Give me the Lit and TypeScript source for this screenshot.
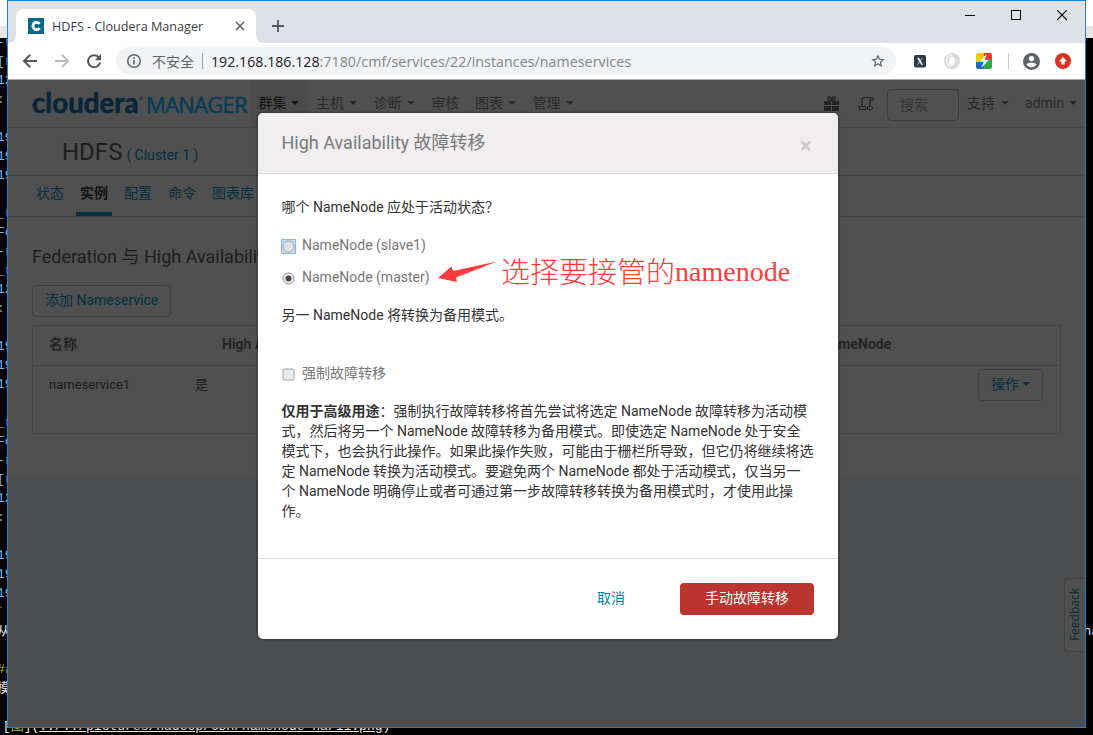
import { LitElement, html, css, nothing } from "lit";
import { customElement } from "lit/decorators.js";

const EDITOR_LINES: [string, string, string?][] = [
  ["-r", "b"], ["[r", "b"], ["12", "b"], ["::", "g"], ["", ""],
  ["19", "b"], ["19", "b"], ["19", "b"], ["", ""],
  ["_r", "b"], ["Fo", "b"], ["-r", "b"], ["_r", "b"], ["12", "b"], ["::", "g"], ["", ""],
  ["19", "b"], ["19", "b"], ["19", "b"], ["", ""],
  ["_r", "b"], ["Fo", "b"], ["-r", "b"], ["[r", "b"], ["12", "b"], ["::", "g"], ["", ""],
  ["19", "b"], ["19", "b"], ["19", "b"], ["``", "g"], ["从", "w", "na"], ["", ""],
  ["##", "h"], ["模", "w"], ["", ""],
];

@customElement("editor-backdrop")
class EditorBackdrop extends LitElement {
  static styles = css`
    :host { display: block; height: 735px; background: #000; overflow: hidden; }
    .bar { height: 26px; background: #fff; }
    .ruler { height: 12px; background: #e6e6e6; }
    .lines { margin-top: -5px; font: 13px/19px "Liberation Mono", "Noto Sans CJK SC", monospace; }
    .line { display: flex; justify-content: space-between; height: 19px; white-space: pre; }
    .line > :first-child { margin-left: -3px; }
    .line > .last { margin-left: -5px; }
    .b { color: #7fb2e8; } .g { color: #8a9a90; } .w { color: #e8e8e8; } .h { color: #a5c63b; }
    .o { color: #e0a040; }
    .tail { margin-right: -6px; color: #e8e8e8; }
  `;
  render() {
    return html`
      <div class="bar"></div><div class="ruler"></div>
      <div class="lines">
        ${EDITOR_LINES.map(([t, c, tail]) => html`<div class="line"><span class=${c}>${t}</span>${tail ? html`<span class="tail">${tail}</span>` : nothing}</div>`)}
        <div class="line"><div class="w last"><span class="o">!</span>[<span class="h">图</span>](<u>../../pictures/hadoop/CDH/namenode_ha/11.png</u>)</div></div>
      </div>`;
  }
}

@customElement("browser-chrome")
class BrowserChrome extends LitElement {
  static styles = css`
    :host { display: block; font-family: "Open Sans", "Noto Sans CJK SC", sans-serif; }
    svg { display: block; flex: none; }
    .strip { display: flex; height: 42px; background: #dee1e6; }
    .tab { display: flex; align-items: center; box-sizing: border-box; width: 240px; height: 34px; margin: 8px 0 0 8px; padding: 0 11px 0 12px; background: #fff; border-radius: 8px 8px 0 0; }
    .title { flex: 1; margin-left: 8px; font-size: 12.6px; color: #3c4043; white-space: nowrap; }
    .flare { margin: 34px 0 0 0; }
    .plus { margin: 18px 0 0 7px; }
    .controls { display: flex; gap: 36px; margin: 9px 18px 0 auto; }
    .toolbar { display: flex; align-items: center; height: 36px; background: #fff; border-bottom: 1px solid #a9a9a9; }
    .nav { display: flex; gap: 16px; margin-left: 14px; }
    .pill { display: flex; align-items: center; box-sizing: border-box; width: 780px; height: 28px; margin-left: 14px; padding: 0 10px; border-radius: 14px; background: #f1f3f4; font-size: 14px; color: #5f6368; white-space: nowrap; }
    .insecure { margin-left: 10px; }
    .sep { width: 1px; height: 16px; background: #9aa0a6; margin: 0 8px; }
    .host { color: #202124; font-size: 14.2px; }
    .path { flex: 1; color: #80868b; font-size: 14.2px; letter-spacing: .07px; }
    .ext { display: flex; align-items: center; margin-left: 16px; }
    .ext .badge { margin-left: 16px; }
    .ext .rule { width: 1px; height: 16px; margin: 0 14px 0 16px; background: #c8cacc; }
    .ext .up { margin-left: 15px; }
    .edge { margin: 34px -8px 0 0; }
  `;
  render() {
    return html`
      <div class="strip">
        <svg class="edge" width="8" height="8"><path d="M8 0v8H0Q8 8 8 0z" fill="#fff"/></svg>
        <div class="tab">
          <svg width="16" height="16"><rect width="16" height="16" fill="#06698a"/><path d="M11.6 5.8A3.7 3.700 0 1 0 11.600 10.200" fill="none" stroke="#fff" stroke-width="2.900"/></svg>
          <span class="title">HDFS - Cloudera Manager</span>
          <svg width="10" height="10"><path d="M1 1l8 8M9 1l-8 8" stroke="#5f6368" stroke-width="1.6"/></svg>
        </div>
        <svg class="flare" width="8" height="8"><path d="M0 0v8H8Q0 8 0 0z" fill="#fff"/></svg>
        <svg class="plus" width="14" height="14"><path d="M7 1v12M1 7h12" stroke="#54585c" stroke-width="1.8"/></svg>
        <div class="controls">
          <svg width="10" height="11"><path d="M0 5.5h10" stroke="#000"/></svg>
          <svg width="10" height="11"><path d="M.5 .5h9v9h-9z" fill="none" stroke="#000"/></svg>
          <svg width="10" height="11"><path d="M0 0l10 10M10 0L0 10" stroke="#000" stroke-width="1.1"/></svg>
        </div>
      </div>
      <div class="toolbar">
        <div class="nav">
          <svg width="16" height="16"><path d="M15 8H2.5M8.2 1.8L2 8l6.2 6.2" fill="none" stroke="#54585c" stroke-width="2"/></svg>
          <svg width="16" height="16"><path d="M1 8h12.5M7.8 1.8L14 8l-6.2 6.2" fill="none" stroke="#babcbe" stroke-width="2"/></svg>
          <svg width="16" height="16"><path d="M13 4.8A6 6 0 1 0 14 9.5" fill="none" stroke="#54585c" stroke-width="2"/><path d="M15 1v6.2H8.8z" fill="#54585c"/></svg>
        </div>
        <div class="pill">
          <svg width="16" height="16"><circle cx="8" cy="8" r="6.3" fill="none" stroke="#5f6368" stroke-width="1.5"/><path d="M8 7v4.6M8 4.3v1.6" stroke="#5f6368" stroke-width="1.6"/></svg>
          <span class="insecure">不安全</span><span class="sep"></span>
          <span class="host">192.168.186.128</span><span class="path">:7180/cmf/services/22/instances/nameservices</span>
          <svg width="16" height="16" viewBox="0 0 24 24"><path d="M22 9.24l-7.19-.62L12 2 9.19 8.63 2 9.24l5.46 4.73L5.82 21 12 17.27 18.18 21l-1.63-7.03L22 9.24zM12 15.4l-3.76 2.27 1-4.28-3.32-2.88 4.38-.38L12 6.1l1.71 4.04 4.38.38-3.32 2.88 1 4.28L12 15.4z" fill="#54585c"/></svg>
        </div>
        <div class="ext">
          <svg width="16" height="16"><rect x="2" y="2" width="12" height="12.5" rx="2" fill="#2b3a45"/><path d="M5.5 5h1.2l4 6.600h-1.200zM10.400 5L5.600 11.600" fill="#fff" stroke="#fff" stroke-width=".7"/></svg>
          <svg class="badge" width="16" height="16"><circle cx="8" cy="8" r="8" fill="#d9d9d9"/><ellipse cx="8" cy="8" rx="3" ry="4.5" fill="#fff"/><path d="M8 1.5A6.5 6.5 0 0 0 7 14" fill="none" stroke="#f3f3f3" stroke-width="1.6"/></svg>
          <svg class="badge" width="16" height="16"><clipPath id="q"><rect width="16" height="16" rx="2.5"/></clipPath><g clip-path="url(#q)"><rect width="8" height="9" fill="#f7c90e"/><rect x="8" width="8" height="6" fill="#e2372b"/><rect y="9" width="8" height="7" fill="#1c68c8"/><rect x="8" y="6" width="8" height="10" fill="#2fa84b"/><path d="M10.5 1L4 8.4h3.6L5.5 15 12.6 7H9z" fill="#fff"/></g></svg>
          <span class="rule"></span>
          <svg width="17" height="17"><circle cx="8.5" cy="8.5" r="8.5" fill="#5f6368"/><circle cx="8.5" cy="5.6" r="2.7" fill="#fff"/><path d="M3.4 11.6c1-2.4 9.200-2.400 10.200 0a6.200 6.200 0 0 1-10.200 0z" fill="#fff"/></svg>
          <svg class="up" width="16" height="16"><circle cx="8" cy="8" r="8" fill="#d93025"/><path d="M8 4l4 4.300H9.700V11.500H6.300V8.300H4z" fill="#fff"/></svg>
        </div>
      </div>`;
  }
}

const caret = html`<i class="caret"></i>`;

@customElement("manager-page")
class ManagerPage extends LitElement {
  static styles = css`
    :host { display: block; box-sizing: border-box; height: 647px; background: #4c4d4e; color: #1d1d1d; font: 14px/20px Roboto, "Noto Sans CJK SC", sans-serif; white-space: nowrap; overflow: hidden; }
    .sheet { height: 398px; background: #505050; }
    .caret { display: inline-block; border: 4px solid transparent; border-top-color: currentColor; border-bottom: 0; }
    .top { display: flex; align-items: center; height: 47px; border-bottom: 1px solid #464646; color: #2a2a2a; }
    .brand { display: flex; align-items: baseline; width: 219px; height: 47px; margin-left: 24px; }
    .word { width: 107px; font: 700 27.6px/46px Lato, sans-serif; letter-spacing: .05px; color: #082638; -webkit-text-stroke: .7px #082638; }
    .reg { width: 7px; font-size: 5px; line-height: 8px; align-self: flex-start; margin-top: 15px; color: #082638; }
    .prod { font: 400 22px/46px "Open Sans", sans-serif; letter-spacing: -.75px; color: #063c50; -webkit-text-stroke: .5px #063c50; }
    .item { display: flex; align-items: center; box-sizing: border-box; height: 47px; width: 57.6px; padding: 0 0 1px 8px; gap: 5px; }
    .plain { width: 43.8px; }
    .on { background: #4b4b4b; color: #111; width: 56.6px; padding-left: 7.4px; margin-right: .4px; }
    .tools { display: flex; align-items: center; margin-left: auto; }
    .search { box-sizing: border-box; width: 72px; height: 32px; margin: 2px 8px 0 13px; padding: 5px 12px; border: 1px solid #3b3b3b; border-radius: 4px; color: #343434; }
    .menu { display: flex; align-items: center; gap: 6px; padding-bottom: 1px; }
    .user { margin: 0 8px 0 16px; gap: 5px; }
    .scroll { margin-left: 19px; }
    .head { display: flex; align-items: baseline; height: 47px; padding-left: 54px; border-bottom: 1px solid #444; }
    .svc { font-size: 24px; line-height: 49px; }
    .link { color: #062f42; }
    .cluster { margin-left: 4px; letter-spacing: -.02px; }
    .tabs { display: flex; gap: 8px; height: 40px; padding-left: 24px; border-bottom: 1px solid #444; }
    .t { box-sizing: border-box; height: 40px; padding: 7px 4px 0; color: #062f42; }
    .sel { color: #111; font-weight: 700; border-bottom: 4px solid #062f42; }
    .content { padding: 30px 24px 0; }
    .h { font-size: 18px; line-height: 20px; }
    .btn { display: inline-flex; align-items: center; box-sizing: border-box; height: 32px; border: 1px solid #3f3f3f; border-radius: 4px; color: #062f42; padding: 0 12px 2px; gap: 3px; }
    .add { margin-top: 18px; }
    .table { box-sizing: border-box; width: 1029px; height: 109px; margin-top: 8px; border: 1px solid #444; }
    .row { display: flex; box-sizing: border-box; }
    .hd { height: 40px; padding: 8px 0 0 16px; border-bottom: 1px solid #444; font-weight: 700; color: #242424; }
    .bd { padding: 3px 17px 0 16px; }
    .bd .cell { padding-top: 6px; font-size: 13px; }
    .n1 { width: 173px; } .n2 { width: 599px; } .c1 { width: 146px; } .act { margin-left: auto; }
    .fb { display: flex; align-items: center; justify-content: center; box-sizing: border-box; width: 21px; height: 74px; margin: 100px 0 0 auto; border: 1px solid #424242; border-right: 0; border-radius: 4px 0 0 4px; background: #505050; color: #0b2733; font-family: "Open Sans", sans-serif; font-size: 12px; writing-mode: vertical-rl; }
    .fb span { transform: rotate(180deg); }
  `;
  render() {
    return html`
      <div class="sheet">
        <div class="top">
          <div class="brand"><span class="word">cloudera</span><span class="reg">®</span><span class="prod">MANAGER</span></div>
          <div class="item on">群集${caret}</div>
          <div class="item">主机${caret}</div>
          <div class="item">诊断${caret}</div>
          <div class="item plain">审核</div>
          <div class="item">图表${caret}</div>
          <div class="item">管理${caret}</div>
          <div class="tools">
            <svg width="15" height="16"><path d="M0 5h7v4H0zM8 5h7v4H8zM0 10h7v5H1q-1 0-1-1zM8 10h7v4q0 1-1 1H8z" fill="#242424"/><path d="M7.500 4.500C3 4.500 3 1 5 1s2.500 3.500 2.500 3.500S8 1 10 1s2 3.500-2.500 3.500z" fill="none" stroke="#242424" stroke-width="1.300"/></svg>
            <svg class="scroll" width="16" height="16"><path d="M4 10V3.500Q4 1.500 6 1.500H14Q12 1.800 12 4V9M14 1.500Q15.500 2 15 4.500H12M8 13.500H3Q1 13.500 1 11V10.500H8M8 13.500L7.500 10.500" fill="none" stroke="#242424" stroke-width="1.200"/><path d="M9.500 10.500h2.500V9l3 3-3 3v-1.500H9.500z" fill="none" stroke="#242424"/></svg>
            <div class="search">搜索</div>
            <div class="menu">支持${caret}</div>
            <div class="menu user">admin${caret}</div>
          </div>
        </div>
        <div class="head"><span class="svc">HDFS</span><span class="link cluster">( Cluster 1 )</span></div>
        <div class="tabs"><div class="t">状态</div><div class="t sel">实例</div><div class="t">配置</div><div class="t">命令</div><div class="t">图表库</div></div>
        <div class="content">
          <div class="h">Federation 与 High Availability</div>
          <div class="btn add">添加 Nameservice</div>
          <div class="table">
            <div class="row hd"><span class="n1">名称</span><span class="n2">High Availability</span><span>NameNode</span></div>
            <div class="row bd"><span class="cell c1">nameservice1</span><span class="cell">是</span><span class="btn act">操作${caret}</span></div>
          </div>
        </div>
      </div>
      <div class="fb"><span>Feedback</span></div>`;
  }
}

@customElement("failover-dialog")
class FailoverDialog extends LitElement {
  static styles = css`
    :host { display: flex; flex-direction: column; box-sizing: border-box; width: 580px; height: 526px; border-radius: 5px; background: #fff; box-shadow: 0 0 3px rgba(0,0,0,.6); font: 14px/20px Roboto, "Noto Sans CJK SC", sans-serif; color: #333; white-space: nowrap; overflow: hidden; }
    .head { display: flex; justify-content: space-between; align-items: center; box-sizing: border-box; height: 61px; padding: 0 26px 0 23.5px; background: #f0eeef; border-bottom: 1px solid #dadada; font-size: 18px; color: #7a7a7a; }
    .head svg { margin-top: 5px; }
    .body { flex: 1; padding: 23px 0 0 23.5px; }
    .opt { display: flex; align-items: center; height: 20px; margin-top: 18px; gap: 6.5px; color: #777; }
    .second { margin-top: 12px; }
    .note { margin-top: 18px; }
    .force { margin-top: 38px; }
    .opt svg { margin: 2px 0 0 -1px; }
    .adv { margin-top: 18px; }
    .foot { display: flex; align-items: center; justify-content: flex-end; box-sizing: border-box; height: 81px; padding-right: 24px; border-top: 1px solid #dadada; }
    .cancel { margin: 0 55px 2px 0; color: #0a7fa8; }
    .go { width: 134px; height: 32px; border-radius: 4px; background: #bb342f; color: #fff; text-align: center; line-height: 30px; }
  `;
  render() {
    return html`
      <div class="head"><span>High Availability 故障转移</span>
        <svg width="12" height="12"><path d="M1.5 1.5l8.5 8.5M10 1.500L1.500 10" stroke="#cbc9ca" stroke-width="2.6"/></svg></div>
      <div class="body">
        <div>哪个 NameNode 应处于活动状态？</div>
        <div class="opt"><svg width="15" height="15"><rect x=".5" y=".5" width="14" height="14" rx="1" fill="#c2dafc" stroke="#8db5f7" stroke-width="1.2"/><circle cx="7.5" cy="7.5" r="5.5" fill="#e3e3e3" stroke="#a5a5a5"/></svg>NameNode (slave1)</div>
        <div class="opt second"><svg width="15" height="15"><circle cx="7.5" cy="7.5" r="5.5" fill="#efefef" stroke="#8c8c8c"/><circle cx="7.5" cy="7.5" r="3" fill="#484848"/></svg>NameNode (master)</div>
        <div class="note">另一 NameNode 将转换为备用模式。</div>
        <div class="opt force"><svg width="15" height="15"><rect x="2" y="2" width="11" height="11" rx="1.5" fill="#ebebeb" stroke="#a0a0a0"/></svg>强制故障转移</div>
        <div class="adv"><b>仅用于高级用途</b>：强制执行故障转移将首先尝试将选定 NameNode 故障转移为活动模<br>式，然后将另一个 NameNode 故障转移为备用模式。即使选定 NameNode 处于安全<br>模式下，也会执行此操作。如果此操作失败，可能由于栅栏所导致，但它仍将继续将选<br>定 NameNode 转换为活动模式。要避免两个 NameNode 都处于活动模式，仅当另一<br>个 NameNode 明确停止或者可通过第一步故障转移转换为备用模式时，才使用此操<br>作。</div>
      </div>
      <div class="foot"><span class="cancel">取消</span><div class="go">手动故障转移</div></div>`;
  }
}

@customElement("app-root")
class AppRoot extends LitElement {
  static styles = css`
    :host { display: block; position: relative; width: 1093px; height: 735px; overflow: hidden; }
    .window { position: absolute; left: 7px; top: 0; box-sizing: border-box; width: 1079px; height: 728px; border: 1px solid #1883d7; overflow: hidden; }
    .dialog { position: absolute; left: 258px; top: 113px; }
    .mark { position: absolute; left: 438px; top: 254px; display: flex; height: 36px; color: #ff3b3b; white-space: nowrap; }
    .mark svg { margin-top: 6px; }
    .cn { margin-left: 4px; font: 300 29px/33px "Noto Sans CJK SC", sans-serif; }
    .en { font: 28px/36px "Liberation Serif", serif; }
  `;
  render() {
    return html`
      <editor-backdrop></editor-backdrop>
      <div class="window"><browser-chrome></browser-chrome><manager-page></manager-page></div>
      <failover-dialog class="dialog"></failover-dialog>
      <div class="mark">
        <svg width="59" height="24" viewBox="0 0 59 24"><path d="M0 18L13.5 6.5 15 11 59 1.5 18 17.5 19 22z" fill="#ff3b3b"/></svg>
        <span class="cn">选择要接管的</span><span class="en">namenode</span>
      </div>`;
  }
}
